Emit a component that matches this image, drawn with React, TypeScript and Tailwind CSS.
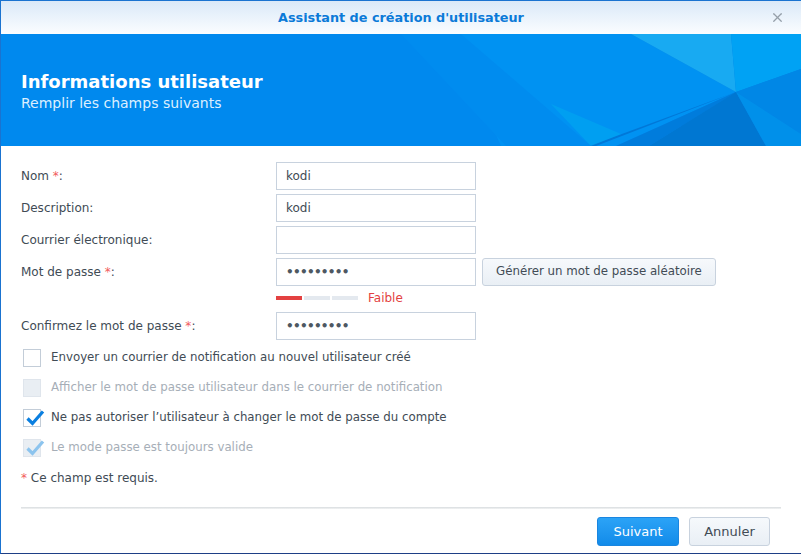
import React from 'react';
import { X } from 'lucide-react';

const font = { fontFamily: '"DejaVu Sans", Verdana, sans-serif' };

function Field({ label, required, value, password }: { label: string; required?: boolean; value?: string; password?: boolean }) {
  return (
    <div className="flex items-center h-[28px]">
      <div className="w-[255px] text-[12px] text-[#414b55]">
        {label}
        {required && <span className="text-[#f25b5b]"> *</span>}:
      </div>
      <div className="w-[200px] h-[28px] border border-[#c8d2de] bg-white flex items-center px-[9px] text-[12px] text-[#414b55]">
        {password ? <span className="tracking-[-0.7px] text-[#4e5862] text-[12px] font-bold">•••••••••</span> : value}
      </div>
    </div>
  );
}

function Check({ checked, disabled, label }: { checked?: boolean; disabled?: boolean; label: string }) {
  return (
    <div className="flex items-center h-[30px] pl-[2px]">
      <div className={`relative w-[18px] h-[18px] border ${disabled ? 'border-[#dfe5ec] bg-[#e9eef3]' : 'border-[#c3cdd8] bg-white'}`}>
        {checked && (
          <svg className="absolute left-[1px] top-[-2px]" width="20" height="20" viewBox="0 0 20 20">
            <path d="M2.5 10.5 L7.5 15.5 L18 3.5" fill="none" stroke={disabled ? '#8cc4ee' : '#0a7fe0'} strokeWidth="3.2" strokeLinejoin="miter" />
          </svg>
        )}
      </div>
      <span className={`ml-[10px] text-[11.8px] ${disabled ? 'text-[#a6aeb7]' : 'text-[#414b55]'}`}>{label}</span>
    </div>
  );
}

export default function App() {
  return (
    <div style={font} className="w-[801px] h-[554px] bg-white border-l border-t border-[#1a73d0] border-b border-b-[#1e3f86] flex flex-col overflow-hidden">
      {/* title bar */}
      <div className="relative h-[33px] bg-gradient-to-b from-[#dae9f8] to-[#fbfdff] flex items-center justify-center">
        <span className="text-[12.8px] font-bold text-[#0b7ad8]">Assistant de création d'utilisateur</span>
        <X className="absolute right-[16px] top-[9px] w-[15px] h-[15px] text-[#959fa9]" strokeWidth={2} />
      </div>

      {/* banner */}
      <div className="relative h-[112px] bg-[#0089ee] overflow-hidden">
        <svg className="absolute inset-0" width="800" height="112" viewBox="0 0 800 112">
          <polygon points="450,0 800,0 800,112 730,112" fill="#0083e4" />
          <polygon points="450,0 630,0 735,58 615,112 500,112" fill="#0092f2" />
          <polygon points="630,0 730,0 735,58" fill="#18aaf2" />
          <polygon points="730,0 800,0 800,35 735,58" fill="#00a2f4" />
          <polygon points="595,112 735,58 580,115" fill="#0078d8" />
          <polygon points="615,112 735,58 648,112" fill="#007cdc" />
          <polygon points="735,58 800,35 800,100" fill="#0087e6" />
          <polygon points="735,58 765,112 648,112" fill="#0077d2" />
          <polygon points="735,58 800,100 800,112 765,112" fill="#0090ea" />
          <polygon points="400,0 460,0 590,112 505,112" fill="#008cef" />
          <polygon points="550,70 620,100 590,112" fill="#00a8f0" opacity="0.6" />
        </svg>
        <div className="relative pl-[20px] pt-[36px] text-white">
          <div className="text-[18px] font-bold leading-[24px]">Informations utilisateur</div>
          <div className="text-[14px] leading-[18px] text-[#dcefff]">Remplir les champs suivants</div>
        </div>
      </div>

      {/* form */}
      <div className="flex-1 px-[20px] pt-[16px]">
        <div className="flex flex-col gap-[4px]">
          <Field label="Nom" required value="kodi" />
          <Field label="Description" value="kodi" />
          <Field label="Courrier électronique" value="" />
          <div className="flex items-center gap-[6px]">
            <Field label="Mot de passe" required password />
            <button className="h-[28px] px-[13px] border border-[#c8d2de] rounded-[3px] bg-gradient-to-b from-[#f6f9fc] to-[#e9eff5] text-[11.8px] text-[#414b55]">
              Générer un mot de passe aléatoire
            </button>
          </div>
        </div>
        <div className="flex items-center h-[26px] pb-[2px] pl-[255px] gap-[2px]">
          <div className="w-[26px] h-[4px] bg-[#e34141]" />
          <div className="w-[26px] h-[4px] bg-[#e4e9ef]" />
          <div className="w-[26px] h-[4px] bg-[#e4e9ef]" />
          <span className="ml-[8px] text-[12px] text-[#e34141]">Faible</span>
        </div>
        <div>
          <Field label="Confirmez le mot de passe" required password />
        </div>
        <div className="mt-[3px] flex flex-col">
          <Check label="Envoyer un courrier de notification au nouvel utilisateur créé" />
          <Check disabled label="Afficher le mot de passe utilisateur dans le courrier de notification" />
          <Check checked label="Ne pas autoriser l’utilisateur à changer le mot de passe du compte" />
          <Check checked disabled label="Le mode passe est toujours valide" />
        </div>
        <div className="mt-[6px] text-[12px] text-[#414b55]">
          <span className="text-[#f25b5b]">*</span> Ce champ est requis.
        </div>
      </div>

      {/* footer */}
      <div className="px-[20px]">
        <div className="h-[2px] bg-gradient-to-b from-[#d8dcdf] to-[#f2f3f4]" />
        <div className="flex justify-end gap-[10px] pr-[11px] pt-[8px] pb-[7px]">
          <button className="w-[82px] h-[29px] rounded-[3px] border border-[#1a86e0] bg-gradient-to-b from-[#2ba3f7] to-[#118be9] text-white text-[13px]">Suivant</button>
          <button className="w-[81px] h-[29px] rounded-[3px] border border-[#c8d2de] bg-gradient-to-b from-[#f6f9fc] to-[#e9eff5] text-[#414b55] text-[13px]">Annuler</button>
        </div>
      </div>
    </div>
  );
}
